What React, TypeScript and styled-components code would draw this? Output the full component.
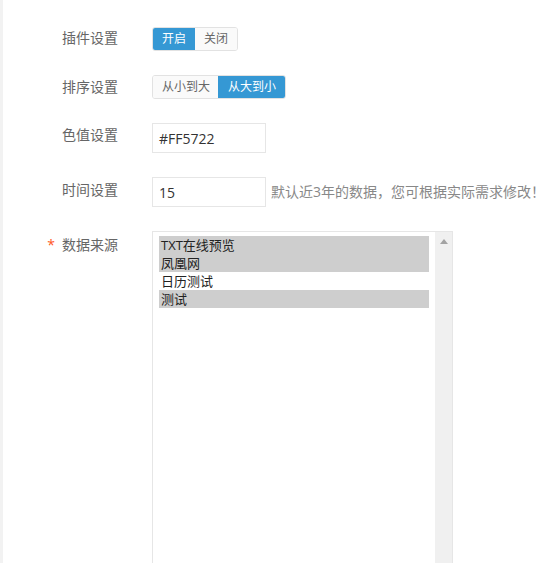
import React from "react";
import styled, { createGlobalStyle } from "styled-components";

const Global = createGlobalStyle`
  html, body { margin: 0; padding: 0; background: #f2f2f2; }
  body { font-family: "Open Sans", "Noto Sans CJK SC", sans-serif; color: #666; }
  * { box-sizing: border-box; }
`;

const Panel = styled.div`
  margin-left: 3px;
  background: #fff;
  height: 563px;
  overflow: hidden;
  padding-top: 27px;
`;

const Form = styled.div`
  display: flex;
  flex-direction: column;
  gap: 24px;
`;

const Row = styled.div`
  display: flex;
  align-items: flex-start;
`;

const Label = styled.div<{ $offset: number }>`
  width: 115px;
  margin-right: 34px;
  margin-top: ${(p) => p.$offset}px;
  text-align: right;
  font-size: 14px;
  line-height: 20px;
  color: #666;
  white-space: nowrap;
`;

const Required = styled.span`
  color: #ff5722;
  margin-right: 7px;
`;

const ButtonGroup = styled.div`
  display: flex;
  height: 24px;
  border-radius: 3px;
  overflow: hidden;
  border: 1px solid #e2e2e2;
`;

const ToggleButton = styled.div<{ $active: boolean }>`
  display: flex;
  align-items: center;
  justify-content: center;
  padding: 0 ${(p) => (p.$active ? "10px" : "9px")};
  font-size: 12px;
  line-height: 22px;
  color: ${(p) => (p.$active ? "#fff" : "#666")};
  background: ${(p) => (p.$active ? "#3598d4" : "#fafafa")};
  margin: ${(p) => (p.$active ? "-1px" : "0")};
  height: ${(p) => (p.$active ? "24px" : "22px")};
`;

const TextInput = styled.div`
  width: 114px;
  height: 30px;
  border: 1px solid #e6e6e6;
  padding-left: 6px;
  display: flex;
  align-items: center;
  font-size: 14px;
  color: #333;
  background: #fff;
`;

const Hint = styled.div`
  margin-left: 5px;
  margin-top: 5px;
  font-size: 14px;
  line-height: 20px;
  color: #888;
  white-space: nowrap;
`;

const ListBox = styled.div`
  width: 301px;
  height: 360px;
  border: 1px solid #e6e6e6;
  display: flex;
  background: #fff;
`;

const OptionList = styled.div`
  flex: 1;
  padding: 4px 6px 0 6px;
`;

const OptionItem = styled.div<{ $selected: boolean }>`
  height: 18px;
  line-height: 18px;
  padding-left: 2px;
  font-size: 13px;
  color: #222;
  background: ${(p) => (p.$selected ? "#cecece" : "transparent")};
  white-space: nowrap;
`;

const ScrollTrack = styled.div`
  width: 17px;
  background: #f0f0f0;
  display: flex;
  justify-content: center;
  padding-top: 7px;
`;

const options = [
  { text: "TXT在线预览", selected: true },
  { text: "凤凰网", selected: true },
  { text: "日历测试", selected: false },
  { text: "测试", selected: true },
];

export default function App() {
  return (
    <>
      <Global />
      <Panel>
        <Form>
          <Row>
            <Label $offset={1}>插件设置</Label>
            <ButtonGroup>
              <ToggleButton $active>开启</ToggleButton>
              <ToggleButton $active={false}>关闭</ToggleButton>
            </ButtonGroup>
          </Row>
          <Row>
            <Label $offset={2}>排序设置</Label>
            <ButtonGroup>
              <ToggleButton $active={false}>从小到大</ToggleButton>
              <ToggleButton $active>从大到小</ToggleButton>
            </ButtonGroup>
          </Row>
          <Row>
            <Label $offset={2}>色值设置</Label>
            <TextInput>#FF5722</TextInput>
          </Row>
          <Row>
            <Label $offset={3}>时间设置</Label>
            <TextInput>15</TextInput>
            <Hint>默认近3年的数据，您可根据实际需求修改！</Hint>
          </Row>
          <Row>
            <Label $offset={4}>
              <Required>*</Required>数据来源
            </Label>
            <ListBox>
              <OptionList>
                {options.map((o) => (
                  <OptionItem key={o.text} $selected={o.selected}>
                    {o.text}
                  </OptionItem>
                ))}
              </OptionList>
              <ScrollTrack>
                <svg width="8" height="5" viewBox="0 0 8 5">
                  <path d="M0 5 L4 0 L8 5 Z" fill="#a3a3a3" />
                </svg>
              </ScrollTrack>
            </ListBox>
          </Row>
        </Form>
      </Panel>
    </>
  );
}
